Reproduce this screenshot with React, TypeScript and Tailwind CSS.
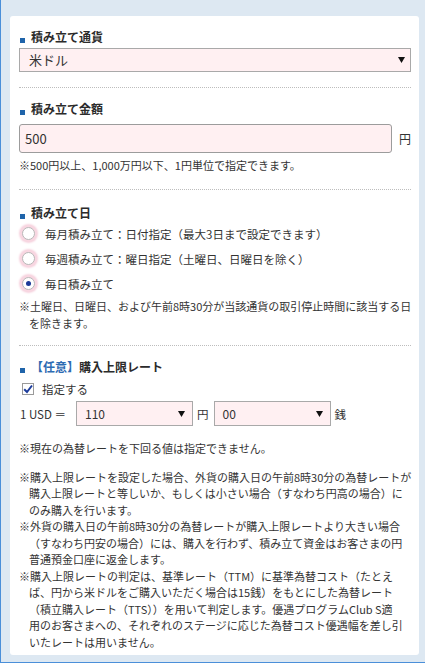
import React from "react";

const font = { fontFamily: '"Noto Sans CJK JP", "Noto Sans", sans-serif' };

function Arrow() {
  return (
    <svg width="7" height="6" viewBox="0 0 7 6" className="shrink-0">
      <polygon points="0,0 7,0 3.5,6" fill="#111" />
    </svg>
  );
}

function Heading({ children }: { children: React.ReactNode }) {
  return (
    <div className="flex h-[16px] items-center">
      <span className="ml-[1px] mr-[6px] mt-[6px] h-[5px] w-[5px] shrink-0 bg-[#1f64aa]" />
      <span className="text-[12px] font-bold leading-[16px] text-[#2b2b2b]">{children}</span>
    </div>
  );
}

function Sep({ mt }: { mt: string }) {
  return <div className={`${mt} border-t border-dotted border-[#bdbdbd]`} />;
}

function Radio({ checked, label }: { checked?: boolean; label: string }) {
  return (
    <div className="flex h-[25px] items-center">
      <span className="ml-[3px] flex h-[13px] w-[13px] shrink-0 items-center justify-center rounded-full border border-[#b8b8b8] bg-white shadow-[0_0_0_2px_#f8d6e1,0_0_2px_3px_#f6d2de]">
        {checked && <span className="h-[5px] w-[5px] rounded-full bg-[#1b3a98]" />}
      </span>
      <span className="ml-[10px] whitespace-nowrap text-[11.5px] leading-[16px] text-[#333]">{label}</span>
    </div>
  );
}

export default function App() {
  return (
    <div className="h-[667px] w-[425px] overflow-hidden bg-white" style={font}>
      <div className="flex h-[663px] flex-col border-b border-l border-[#4a8fd9] bg-[#dde8f2] pb-[7px] pl-[9px] pr-[6px] pt-[16px]">
        <div className="flex-1 rounded-[3px] bg-white pl-[9px] pr-[8px] pt-[13px] text-[#333]">
          {/* Section 1 */}
          <Heading>積み立て通貨</Heading>
          <div className="mt-[3px] flex h-[24px] items-center justify-between border border-[#a9a9a9] bg-[#fff0f2] pl-[9px] pr-[5px]">
            <span className="text-[13px] leading-[16px]">米ドル</span>
            <Arrow />
          </div>
          <Sep mt="mt-[15px]" />

          {/* Section 2 */}
          <div className="mt-[13px]">
            <Heading>積み立て金額</Heading>
          </div>
          <div className="mt-[7px] flex items-center">
            <div className="flex h-[29px] w-[374px] items-center rounded-[3px] border border-[#9c9c9c] bg-[#fff0f2] pl-[5px]">
              <span className="text-[13px] leading-[16px]">500</span>
            </div>
            <span className="ml-[7px] text-[12px] leading-[16px]">円</span>
          </div>
          <div className="mt-[4px] whitespace-nowrap text-[11px] leading-[16px]">
            ※500円以上、1,000万円以下、1円単位で指定できます。
          </div>
          <Sep mt="mt-[16px]" />

          {/* Section 3 */}
          <div className="mt-[15px]">
            <Heading>積み立て日</Heading>
          </div>
          <Radio label="毎月積み立て：日付指定（最大3日まで設定できます）" />
          <Radio label="毎週積み立て：曜日指定（土曜日、日曜日を除く）" />
          <Radio checked label="毎日積み立て" />
          <div className="mt-[2px] whitespace-nowrap pl-[10px] -indent-[10px] text-[11px] leading-[16.5px]">
            ※土曜日、日曜日、および午前8時30分が当該通貨の取引停止時間に該当する日
            <br />
            を除きます。
          </div>
          <Sep mt="mt-[14px]" />

          {/* Section 4 */}
          <div className="mt-[13px]">
            <div className="flex h-[16px] items-center">
              <span className="ml-[1px] mr-[6px] mt-[6px] h-[5px] w-[5px] shrink-0 bg-[#1f64aa]" />
              <span className="text-[12px] font-bold leading-[16px] text-[#2b2b2b]">
                <span className="text-[#2d6bb3]">【任意】</span>購入上限レート
              </span>
            </div>
          </div>
          <div className="mt-[3px] flex h-[22px] items-center">
            <span className="ml-[3px] flex h-[12px] w-[12px] shrink-0 items-center justify-center border border-[#9a9a9a] bg-white">
              <svg width="10" height="10" viewBox="0 0 10 10">
                <path d="M1.2 5.2 L4 8 L9 1.5" fill="none" stroke="#1c3c9c" strokeWidth="2" />
              </svg>
            </span>
            <span className="ml-[8px] text-[11.5px] leading-[16px]">指定する</span>
          </div>
          <div className="mt-[1px] flex items-center">
            <span className="ml-[1px] w-[56px] whitespace-nowrap text-[11.5px] leading-[16px]">1 USD ＝</span>
            <div className="flex h-[25px] w-[117px] items-center justify-between border border-[#a9a9a9] bg-[#fff0f2] pl-[8px] pr-[7px]">
              <span className="text-[12px] leading-[16px]">110</span>
              <Arrow />
            </div>
            <span className="ml-[4px] text-[11.5px] leading-[16px]">円</span>
            <div className="ml-[5px] flex h-[25px] w-[117px] items-center justify-between border border-[#a9a9a9] bg-[#fff0f2] pl-[8px] pr-[7px]">
              <span className="text-[12px] leading-[16px]">00</span>
              <Arrow />
            </div>
            <span className="ml-[4px] text-[11.5px] leading-[16px]">銭</span>
          </div>
          <div className="mt-[14px] whitespace-nowrap text-[11px] leading-[16.5px]">
            ※現在の為替レートを下回る値は指定できません。
          </div>
          <div className="mt-[12px] whitespace-nowrap text-[11px] leading-[16.5px]">
            <div className="pl-[10px] -indent-[10px]">
              ※購入上限レートを設定した場合、外貨の購入日の午前8時30分の為替レートが
              <br />
              購入上限レートと等しいか、もしくは小さい場合（すなわち円高の場合）に
              <br />
              のみ購入を行います。
            </div>
            <div className="pl-[10px] -indent-[10px]">
              ※外貨の購入日の午前8時30分の為替レートが購入上限レートより大きい場合
              <br />
              （すなわち円安の場合）には、購入を行わず、積み立て資金はお客さまの円
              <br />
              普通預金口座に返金します。
            </div>
            <div className="pl-[10px] -indent-[10px]">
              ※購入上限レートの判定は、基準レート（TTM）に基準為替コスト（たとえ
              <br />
              ば、円から米ドルをご購入いただく場合は15銭）をもとにした為替レート
              <br />
              （積立購入レート（TTS））を用いて判定します。優遇プログラムClub S適
              <br />
              用のお客さまへの、それぞれのステージに応じた為替コスト優遇幅を差し引
              <br />
              いたレートは用いません。
            </div>
          </div>
        </div>
      </div>
    </div>
  );
}
